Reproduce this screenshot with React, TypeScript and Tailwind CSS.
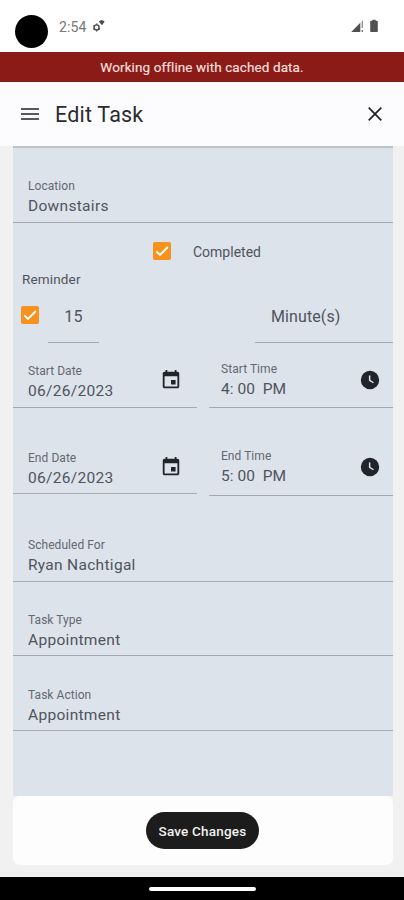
import clsx from "clsx";

interface FieldProps {
  label: string;
  value: string;
  className?: string;
  icon?: "calendar" | "clock";
}

function CalendarIcon() {
  return (
    <svg viewBox="0 0 24 24" className="size-[22px]" fill="#22242b">
      <path d="M17 12h-5v5h5v-5zM16 1v2H8V1H6v2H5c-1.11 0-1.99.9-1.99 2L3 19c0 1.1.89 2 2 2h14c1.1 0 2-.9 2-2V5c0-1.1-.9-2-2-2h-1V1h-2zm3 18H5V8h14v11z" />
    </svg>
  );
}

function ClockIcon() {
  return (
    <svg viewBox="0 0 24 24" className="size-[22px]">
      <circle cx="12" cy="12" r="10" fill="#22242b" />
      <path d="M11.6 7v5.4l4.2 2.6" fill="none" stroke="#dde3eb" strokeWidth="1.6" />
    </svg>
  );
}

function Checkbox() {
  return (
    <span className="flex size-[18px] shrink-0 items-center justify-center rounded-[2px] bg-[#f6921e]">
      <svg viewBox="0 0 18 18" className="size-[18px]" fill="none" stroke="#fff" strokeWidth="1.8">
        <path d="M3.3 9.3l3.7 3.7 7.9-8" />
      </svg>
    </span>
  );
}

function Field({ label, value, className, icon }: FieldProps) {
  const isTime = icon === "clock";
  return (
    <div
      className={clsx(
        "flex items-end justify-between border-b border-[#a3a8b1]",
        isTime ? "pl-[12px]" : "pl-[15px]",
        className,
      )}
    >
      <div>
        <div className="text-[12px] leading-5 tracking-[0.05px] text-[#64686f]">{label}</div>
        <div className={clsx("whitespace-pre text-[15.5px] leading-5 text-[#50545b]", isTime ? "tracking-[0.05px]" : "tracking-[0.3px]")}>
          {value}
        </div>
      </div>
      {icon === "calendar" && <div className="mr-[15px] mb-[10px]"><CalendarIcon /></div>}
      {icon === "clock" && <div className="mr-[12px] mb-[8px]"><ClockIcon /></div>}
    </div>
  );
}

function StatusBar() {
  return (
    <div className="flex h-[52px] items-start bg-white pl-[15px] pr-[26px]">
      <span className="mt-[15px] size-[33px] rounded-full bg-black" />
      <span className="mt-[17px] ml-[11px] text-[14px] leading-5 tracking-[0.1px] text-[#777]">2:54</span>
      <svg viewBox="0 0 14 14" className="mt-[19px] ml-[6px] size-[14px]" fill="none" stroke="#4a4a4a">
        <circle cx="4.6" cy="8.4" r="2.5" strokeWidth="1.4" />
        <path d="M4.6 4.6v1.2M4.6 11v1.6M1.3 6.6l1 .6M1.3 10.4l1-.6M8 10.4l-1-.6" strokeWidth="1.3" />
        <path d="M6.8 2.4Q9.6 .2 12.6 2.4L10 6.2z" fill="#4a4a4a" stroke="none" />
      </svg>
      <div className="mt-[19px] ml-auto flex gap-[6px]">
        <svg viewBox="0 0 13 14" className="h-[14px] w-[13px]" fill="#505050">
          <path d="M.2 13L9.3 3.8V13z" />
          <path d="M10.6 2.5l1.2-1.2V9h-1.2zM10.6 11h1.4v2h-1.4z" opacity=".75" />
        </svg>
        <svg viewBox="0 0 8 14" className="h-[14px] w-[8px]" fill="#505050">
          <path d="M2.4 .8h3.2v1H7q.8 0 .8.8v9.6q0 .8-.8.8H1q-.8 0-.8-.8V2.6q0-.8.8-.8h1.4z" />
        </svg>
      </div>
    </div>
  );
}

export default function App() {
  return (
    <div className="flex h-[900px] w-full flex-col overflow-hidden bg-[#f1f1f1] font-['Roboto',sans-serif]">
      <StatusBar />
      <div className="flex h-[30px] items-center justify-center bg-[#8b1b17] pt-px text-[13.5px] tracking-[0.1px] text-[#f4dedc] [-webkit-text-stroke:0.2px_#f4dedc]">
        Working offline with cached data.
      </div>

      <header className="flex h-[64px] items-center bg-[#fcfcff] pl-[21px] pr-[22px]">
        <svg viewBox="0 0 18 14" className="h-[14px] w-[18px]" stroke="#222" strokeWidth="1.7">
          <path d="M0 2h18M0 7h18M0 12h18" />
        </svg>
        <h1 className="ml-[16px] pt-[2px] text-[21.5px] leading-7 tracking-[0.2px] text-[#2b2b2d]">Edit Task</h1>
        <svg viewBox="0 0 14 14" className="ml-auto size-[14px]" stroke="#222" strokeWidth="1.7">
          <path d="M.7.7l12.6 12.6M13.3.7L.7 13.3" />
        </svg>
      </header>

      <main className="mr-[11px] ml-[13px] h-[650px] border-t-2 border-[#bcc4cd] bg-[#dde3eb]">
        <Field label="Location" value="Downstairs" className="h-[75px] pb-[6px]" />

        <div className="flex h-[56px] items-center pl-[140px]">
          <Checkbox />
          <span className="ml-[22px] pt-px text-[14px] leading-5 text-[#50545b]">Completed</span>
        </div>
        <div className="-mt-[10px] h-5 pl-[9px] text-[13.5px] leading-5 tracking-[0.15px] text-[#50545b]">Reminder</div>

        <div className="flex h-[54px] pl-2">
          <div className="pt-[17px]"><Checkbox /></div>
          <div className="ml-[9px] w-[51px] border-b border-[#a3a8b1] pt-[18px] text-center text-[16px] leading-5 tracking-[0.3px] text-[#50545b]">
            15
          </div>
          <div className="ml-auto w-[138px] border-b border-[#a3a8b1] pt-[18px] pl-4 text-[16px] leading-5 tracking-[0.1px] text-[#50545b]">
            Minute(s)
          </div>
        </div>

        <div className="flex justify-between">
          <Field label="Start Date" value="06/26/2023" icon="calendar" className="h-[65px] w-[184px] pb-[6px]" />
          <Field label="Start Time" value="4: 00  PM" icon="clock" className="h-[65px] w-[184px] pb-[8px]" />
        </div>
        <div className="flex justify-between">
          <Field label="End Date" value="06/26/2023" icon="calendar" className="h-[86px] w-[184px] pb-[5px]" />
          <Field label="End Time" value="5: 00  PM" icon="clock" className="h-[88px] w-[184px] pb-[9px]" />
        </div>

        <Field label="Scheduled For" value="Ryan Nachtigal" className="h-[86px] pb-[6px]" />
        <Field label="Task Type" value="Appointment" className="h-[74px] pb-[5px]" />
        <Field label="Task Action" value="Appointment" className="h-[75px] pb-[5px]" />
      </main>

      <footer className="mr-[11px] ml-[13px] flex h-[69px] items-center justify-center rounded-[7px] bg-[#fdfdfe] pr-px">
        <button className="h-[37px] w-[113px] rounded-full bg-[#1c1c1c] pt-px text-[13.5px] font-medium tracking-[0.2px] text-[#f2f2f2]">
          Save Changes
        </button>
      </footer>

      <div className="mt-auto flex h-[23px] items-center justify-center bg-black">
        <span className="h-[4px] w-[107px] rounded-full bg-white" />
      </div>
    </div>
  );
}
